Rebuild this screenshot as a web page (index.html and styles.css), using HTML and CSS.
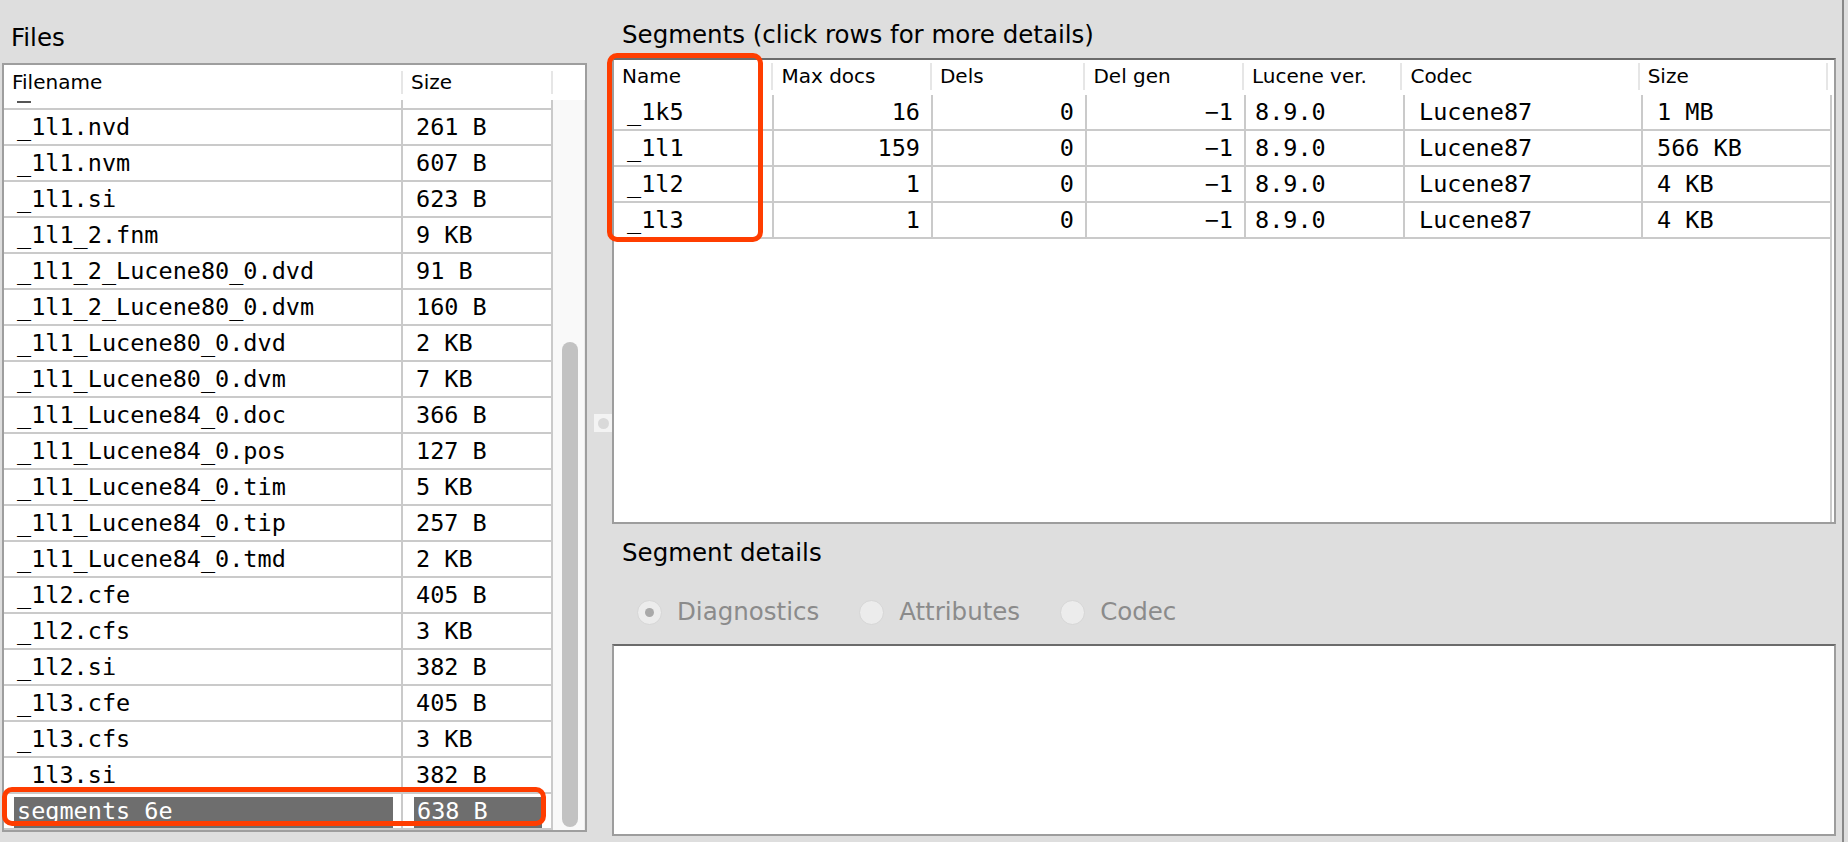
FILE: index.html
```html
<!DOCTYPE html>
<html>
<head>
<meta charset="utf-8">
<title>Segments</title>
<link rel="stylesheet" href="styles.css">
</head>
<body>
<div class="window">
  <div class="left-panel">
    <div class="panel-title files-title">Files</div>
    <div class="files-table">
      <div class="fthead">
        <div class="fth c-fname">Filename</div>
        <div class="fth c-fsize">Size</div>
        <div class="fth c-fsb"></div>
      </div>
      <div class="fbody">
        <div class="frows">
          <div class="frow partial"><div class="fcell c-fname"><span class="cut-mark"></span></div><div class="fcell c-fsize"></div></div>
          <div class="frow"><div class="fcell c-fname">_1l1.nvd</div><div class="fcell c-fsize">261 B</div></div>
          <div class="frow"><div class="fcell c-fname">_1l1.nvm</div><div class="fcell c-fsize">607 B</div></div>
          <div class="frow"><div class="fcell c-fname">_1l1.si</div><div class="fcell c-fsize">623 B</div></div>
          <div class="frow"><div class="fcell c-fname">_1l1_2.fnm</div><div class="fcell c-fsize">9 KB</div></div>
          <div class="frow"><div class="fcell c-fname">_1l1_2_Lucene80_0.dvd</div><div class="fcell c-fsize">91 B</div></div>
          <div class="frow"><div class="fcell c-fname">_1l1_2_Lucene80_0.dvm</div><div class="fcell c-fsize">160 B</div></div>
          <div class="frow"><div class="fcell c-fname">_1l1_Lucene80_0.dvd</div><div class="fcell c-fsize">2 KB</div></div>
          <div class="frow"><div class="fcell c-fname">_1l1_Lucene80_0.dvm</div><div class="fcell c-fsize">7 KB</div></div>
          <div class="frow"><div class="fcell c-fname">_1l1_Lucene84_0.doc</div><div class="fcell c-fsize">366 B</div></div>
          <div class="frow"><div class="fcell c-fname">_1l1_Lucene84_0.pos</div><div class="fcell c-fsize">127 B</div></div>
          <div class="frow"><div class="fcell c-fname">_1l1_Lucene84_0.tim</div><div class="fcell c-fsize">5 KB</div></div>
          <div class="frow"><div class="fcell c-fname">_1l1_Lucene84_0.tip</div><div class="fcell c-fsize">257 B</div></div>
          <div class="frow"><div class="fcell c-fname">_1l1_Lucene84_0.tmd</div><div class="fcell c-fsize">2 KB</div></div>
          <div class="frow"><div class="fcell c-fname">_1l2.cfe</div><div class="fcell c-fsize">405 B</div></div>
          <div class="frow"><div class="fcell c-fname">_1l2.cfs</div><div class="fcell c-fsize">3 KB</div></div>
          <div class="frow"><div class="fcell c-fname">_1l2.si</div><div class="fcell c-fsize">382 B</div></div>
          <div class="frow"><div class="fcell c-fname">_1l3.cfe</div><div class="fcell c-fsize">405 B</div></div>
          <div class="frow"><div class="fcell c-fname">_1l3.cfs</div><div class="fcell c-fsize">3 KB</div></div>
          <div class="frow"><div class="fcell c-fname">_1l3.si</div><div class="fcell c-fsize">382 B</div></div>
          <div class="frow selected"><div class="fcell c-fname"><span class="selbg">segments_6e</span></div><div class="fcell c-fsize"><span class="selbg">638 B</span></div></div>
        </div>
        <div class="fscroll"><div class="fthumb"></div></div>
      </div>
    </div>
  </div>

  <div class="splitter"><div class="knob"></div></div>

  <div class="right-panel">
    <div class="panel-title seg-title">Segments (click rows for more details)</div>
    <div class="seg-table">
      <div class="sthead">
        <div class="sth c-name">Name</div>
        <div class="sth c-max">Max docs</div>
        <div class="sth c-dels">Dels</div>
        <div class="sth c-gen">Del gen</div>
        <div class="sth c-ver">Lucene ver.</div>
        <div class="sth c-codec">Codec</div>
        <div class="sth c-size">Size</div>
        <div class="sth c-rest"></div>
      </div>
      <div class="stbody">
        <div class="strows">
          <div class="strow"><div class="stcell c-name">_1k5</div><div class="stcell c-max num">16</div><div class="stcell c-dels num">0</div><div class="stcell c-gen num">−1</div><div class="stcell c-ver">8.9.0</div><div class="stcell c-codec">Lucene87</div><div class="stcell c-size">1 MB</div></div>
          <div class="strow"><div class="stcell c-name">_1l1</div><div class="stcell c-max num">159</div><div class="stcell c-dels num">0</div><div class="stcell c-gen num">−1</div><div class="stcell c-ver">8.9.0</div><div class="stcell c-codec">Lucene87</div><div class="stcell c-size">566 KB</div></div>
          <div class="strow"><div class="stcell c-name">_1l2</div><div class="stcell c-max num">1</div><div class="stcell c-dels num">0</div><div class="stcell c-gen num">−1</div><div class="stcell c-ver">8.9.0</div><div class="stcell c-codec">Lucene87</div><div class="stcell c-size">4 KB</div></div>
          <div class="strow"><div class="stcell c-name">_1l3</div><div class="stcell c-max num">1</div><div class="stcell c-dels num">0</div><div class="stcell c-gen num">−1</div><div class="stcell c-ver">8.9.0</div><div class="stcell c-codec">Lucene87</div><div class="stcell c-size">4 KB</div></div>
        </div>
        <div class="stline"></div>
      </div>
    </div>

    <div class="panel-title seg-title details-title">Segment details</div>
    <div class="radios">
      <div class="radio"><span class="circle checked"></span><span class="rlabel">Diagnostics</span></div>
      <div class="radio"><span class="circle"></span><span class="rlabel">Attributes</span></div>
      <div class="radio"><span class="circle"></span><span class="rlabel">Codec</span></div>
    </div>
    <div class="details-area"></div>
  </div>

  <div class="edge"></div>
</div>

<div class="hl hl-files"></div>
<div class="hl hl-name"></div>
</body>
</html>
```

FILE: styles.css
```css
* { box-sizing: border-box; }

html, body {
  margin: 0;
  padding: 0;
}

body {
  width: 1848px;
  height: 842px;
  overflow: hidden;
  position: relative;
  background: #dedede;
  color: #000;
  font-family: "DejaVu Sans", "Liberation Sans", sans-serif;
}

.window {
  display: flex;
  height: 842px;
}

/* ---------- panel titles ---------- */
.panel-title {
  font-size: 24.5px;
  line-height: 30px;
  height: 30px;
  white-space: nowrap;
}

/* ---------- left panel ---------- */
.left-panel {
  width: 587px;
  flex: none;
  padding: 23px 0 0 2px;
  display: flex;
  flex-direction: column;
}

.files-title {
  padding-left: 9px;
}

.files-table {
  margin-top: 10px;
  width: 585px;
  height: 769px;
  border: 2px solid #9e9e9e;
  background: #fff;
  display: flex;
  flex-direction: column;
}

.fthead {
  display: flex;
  height: 35px;
  flex: none;
}

.fth {
  position: relative;
  font-size: 20px;
  line-height: 35px;
  padding-left: 8px;
  white-space: nowrap;
}

.fth::after {
  content: "";
  position: absolute;
  right: 0;
  top: 6px;
  bottom: 6px;
  width: 2px;
  background: #e6e6e6;
}

.fth.c-fsb::after { display: none; }

.c-fname { width: 399px; }
.c-fsize { width: 150px; }
.c-fsb { width: 32px; }

.fbody {
  flex: 1;
  display: flex;
  overflow: hidden;
}

.frows {
  width: 549px;
}

.frow {
  display: flex;
  height: 36px;
  border-bottom: 2px solid #cacaca;
  font-family: "DejaVu Sans Mono", "Liberation Mono", monospace;
  font-size: 23.5px;
  line-height: 34px;
}

.frow.partial {
  height: 10px;
}

.cut-mark {
  display: block;
  margin-top: 1px;
  width: 14px;
  height: 2px;
  background: #555;
}

.fcell {
  border-right: 2px solid #cacaca;
  padding-left: 13px;
  white-space: nowrap;
  overflow: hidden;
}

.frow.selected .c-fname { padding: 3px 8px 0 10px; }
.frow.selected .c-fsize { padding: 3px 9px 0 11px; }

.selbg {
  display: block;
  height: 31px;
  line-height: 28px;
  background: #6e6e6e;
  color: #fff;
  padding-left: 3px;
}

.fscroll {
  width: 32px;
  flex: none;
  position: relative;
  background: #f9f9f9;
  border-right: 1px solid #ececec;
}

.fthumb {
  position: absolute;
  left: 9px;
  width: 16px;
  top: 242px;
  bottom: 3px;
  border-radius: 8px;
  background: #c2c2c2;
}

/* ---------- splitter ---------- */
.splitter {
  width: 25px;
  flex: none;
  display: flex;
  align-items: center;
  justify-content: flex-end;
  padding-top: 4px;
}

.knob {
  width: 18px;
  height: 18px;
  background: #f3f3f3;
  display: flex;
  align-items: center;
  justify-content: center;
}

.knob::before {
  content: "";
  width: 11px;
  height: 11px;
  border-radius: 50%;
  background: #d9d9d9;
}

/* ---------- right panel ---------- */
.right-panel {
  width: 1224px;
  flex: none;
  padding-top: 20px;
  display: flex;
  flex-direction: column;
}

.seg-title {
  padding-left: 10px;
}

.seg-table {
  margin-top: 8px;
  height: 466px;
  border: 2px solid #9d9d9d;
  border-top-color: #6b6b6b;
  background: #fff;
  display: flex;
  flex-direction: column;
}

.sthead {
  display: flex;
  height: 35px;
  flex: none;
}

.sth {
  position: relative;
  font-size: 20px;
  line-height: 33px;
  padding-left: 8px;
  white-space: nowrap;
}

.sth::after {
  content: "";
  position: absolute;
  right: 0;
  top: 3px;
  bottom: 5px;
  width: 2px;
  background: #e6e6e6;
}

.sth.c-size::after { right: -2px; }
.sth.c-rest::after { display: none; }

.c-name { width: 160px; }
.c-max { width: 159px; }
.c-dels { width: 154px; }
.c-gen { width: 159px; }
.c-ver { width: 159px; }
.c-codec { width: 238px; }
.c-size { width: 187px; }
.c-rest { width: 4px; }

.stbody {
  flex: 1;
  display: flex;
}

.strows {
  width: 1216px;
}

.strow {
  display: flex;
  height: 36px;
  border-bottom: 2px solid #cacaca;
  font-family: "DejaVu Sans Mono", "Liberation Mono", monospace;
  font-size: 23.5px;
  line-height: 34px;
}

.stcell {
  border-right: 2px solid #cacaca;
  padding-left: 13px;
  white-space: nowrap;
}

.stcell.num {
  text-align: right;
  padding-left: 0;
  padding-right: 11px;
}

.stcell.c-ver { padding-left: 9px; }
.stcell.c-codec { padding-left: 14px; }
.stcell.c-size { padding-left: 14px; border-right: none; }

.stline {
  width: 2px;
  background: #cacaca;
}

.details-title {
  margin-top: 14px;
}

.radios {
  margin-top: 29px;
  height: 30px;
  padding-left: 25px;
  display: flex;
  align-items: center;
  font-size: 24.5px;
  color: #8b8b8b;
}

.radio {
  display: flex;
  align-items: center;
  gap: 15px;
  margin-right: 40px;
}

.circle {
  width: 25px;
  height: 25px;
  border-radius: 50%;
  background: #ececec;
  border: 1px solid #d6d6d6;
  display: flex;
  align-items: center;
  justify-content: center;
}

.circle.checked::before {
  content: "";
  width: 9px;
  height: 9px;
  border-radius: 50%;
  background: #a9a9a9;
}

.rlabel {
  line-height: 30px;
  white-space: nowrap;
}

.details-area {
  margin-top: 17px;
  height: 192px;
  border: 2px solid #9d9d9d;
  border-top-color: #6b6b6b;
  background: #fff;
}

/* ---------- window right edge ---------- */
.edge {
  margin-left: 6px;
  width: 2px;
  background: #888;
  flex: none;
}

/* ---------- annotation highlights ---------- */
.hl {
  position: absolute;
  border: 5px solid #ff3d00;
  border-radius: 10px;
}

.hl-files {
  left: 2px;
  top: 787px;
  width: 544px;
  height: 39px;
}

.hl-name {
  left: 607px;
  top: 53px;
  width: 156px;
  height: 189px;
}
```
